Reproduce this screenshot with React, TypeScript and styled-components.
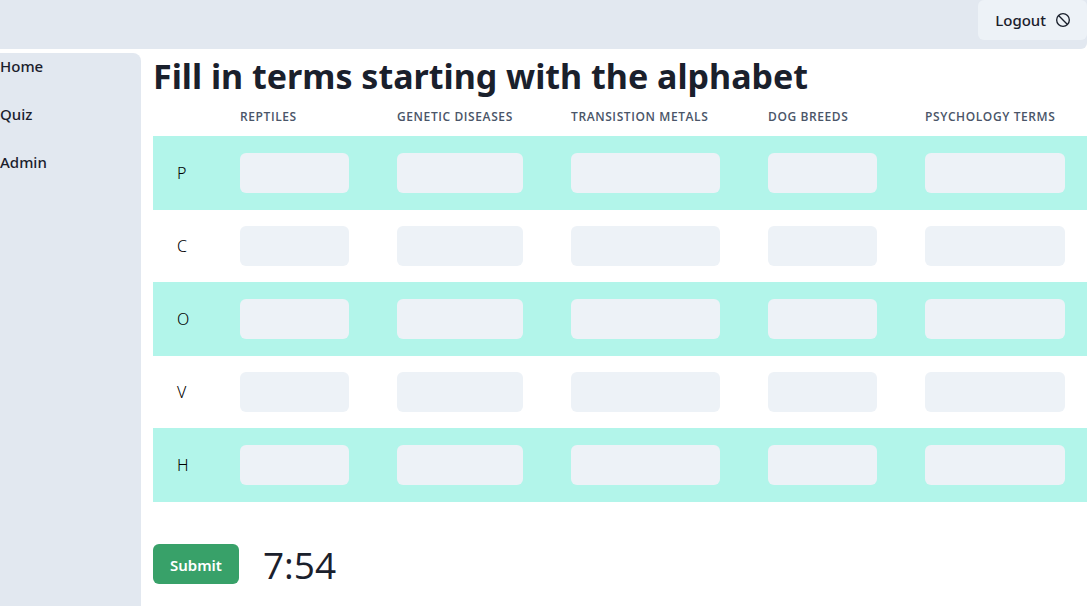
import React from "react";
import styled, { createGlobalStyle } from "styled-components";

const GlobalStyle = createGlobalStyle`
  *, *::before, *::after { box-sizing: border-box; }
  body {
    margin: 0;
    background: #fff;
    color: #1a202c;
    font-family: "Noto Sans", "Open Sans", sans-serif;
    font-size: 15px;
    line-height: 24px;
  }
  button, input { font: inherit; color: inherit; border: 0; }
`;

const Page = styled.div`
  display: flex;
  flex-direction: column;
  gap: 4px;
  min-height: 100vh;
`;

const TopBar = styled.header`
  display: flex;
  justify-content: flex-end;
  align-items: flex-start;
  height: 49px;
  background: #e2e8f0;
  border-radius: 0 0 6px 0;
`;

const Button = styled.button<{ $primary?: boolean }>`
  display: inline-flex;
  align-items: center;
  justify-content: center;
  gap: 9px;
  height: 40px;
  padding: ${(p) => (p.$primary ? "1px 17px 0" : "0 16px 0 17px")};
  border-radius: 6px;
  cursor: pointer;
  font-weight: ${(p) => (p.$primary ? 600 : 500)};
  background: ${(p) => (p.$primary ? "#38a169" : "#edf2f7")};
  color: ${(p) => (p.$primary ? "#fff" : "#1a202c")};
`;

const Body = styled.div`
  display: flex;
  flex: 1;
  gap: 12px;
`;

const Sidebar = styled.nav`
  display: flex;
  flex-direction: column;
  flex: 0 0 141px;
  gap: 24px;
  padding-top: 1px;
  background: #e2e8f0;
  border-radius: 0 8px 0 0;
`;

const NavLink = styled.a`
  color: inherit;
  font-weight: 500;
  text-decoration: none;
`;

const Main = styled.main`
  flex: 1;
  min-width: 0;
`;

const Title = styled.h1`
  margin: 0;
  padding-top: 3px;
  font-size: 34px;
  line-height: 40px;
  font-weight: 700;
`;

const TableArea = styled.div`
  overflow: hidden;
`;

const Table = styled.table`
  width: 100%;
  min-width: 936px;
  table-layout: fixed;
  border-collapse: collapse;
`;

const Col = styled.col<{ $width: number }>`
  width: ${(p) => p.$width}px;
`;

const HeadCell = styled.th`
  padding: 13px 24px 11px;
  border-bottom: 1px solid #b2f5ea;
  color: #4a5568;
  font-family: "Open Sans", "Noto Sans", sans-serif;
  font-size: 12px;
  line-height: 16px;
  font-weight: 600;
  letter-spacing: 0.6px;
  text-align: left;
  text-transform: uppercase;
  white-space: nowrap;
`;

const Row = styled.tr`
  &:nth-child(odd) { background: #b2f5ea; }
`;

const Cell = styled.td`
  padding: 16px 24px;
  border-bottom: 1px solid #b2f5ea;
`;

const Letter = styled.th`
  padding: 16px 24px;
  border-bottom: 1px solid #b2f5ea;
  color: #000;
  font-size: 16px;
  font-weight: 300;
  text-align: left;
`;

const Answer = styled.input`
  display: block;
  width: 100%;
  height: 40px;
  padding: 0 16px;
  border-radius: 6px;
  background: #edf2f7;
`;

const Footer = styled.div`
  display: flex;
  align-items: center;
  gap: 24px;
  padding: 32px 0 12px;
`;

const Timer = styled.time`
  padding-top: 2px;
  font-family: "Open Sans", "Noto Sans", sans-serif;
  font-size: 37px;
  line-height: 58px;
  font-weight: 400;
`;

const categories = [
  { name: "Reptiles", width: 157 },
  { name: "Genetic diseases", width: 174 },
  { name: "Transistion metals", width: 197 },
  { name: "Dog breeds", width: 157 },
  { name: "Psychology terms", width: 188 },
];

const letters = ["P", "C", "O", "V", "H"];

const NotAllowedIcon = () => (
  <svg width="16" height="16" viewBox="0 0 24 24" fill="none" stroke="currentColor" strokeWidth="2" aria-hidden="true">
    <circle cx="12" cy="12" r="9.5" />
    <path d="M5.3 5.3 18.7 18.7" />
  </svg>
);

export default function App() {
  return (
    <>
      <GlobalStyle />
      <Page>
        <TopBar>
          <Button type="button">
            Logout
            <NotAllowedIcon />
          </Button>
        </TopBar>
        <Body>
          <Sidebar>
            <NavLink href="#home">Home</NavLink>
            <NavLink href="#quiz">Quiz</NavLink>
            <NavLink href="#admin">Admin</NavLink>
          </Sidebar>
          <Main>
            <Title>Fill in terms starting with the alphabet</Title>
            <TableArea>
              <Table>
                <colgroup>
                  <Col $width={63} />
                  {categories.map((c) => (
                    <Col key={c.name} $width={c.width} />
                  ))}
                </colgroup>
                <thead>
                  <tr>
                    <HeadCell />
                    {categories.map((c) => (
                      <HeadCell key={c.name} scope="col">{c.name}</HeadCell>
                    ))}
                  </tr>
                </thead>
                <tbody>
                  {letters.map((letter) => (
                    <Row key={letter}>
                      <Letter scope="row">{letter}</Letter>
                      {categories.map((c) => (
                        <Cell key={c.name}>
                          <Answer type="text" aria-label={`${c.name}, ${letter}`} />
                        </Cell>
                      ))}
                    </Row>
                  ))}
                </tbody>
              </Table>
            </TableArea>
            <Footer>
              <Button type="submit" $primary>Submit</Button>
              <Timer>7:54</Timer>
            </Footer>
          </Main>
        </Body>
      </Page>
    </>
  );
}
